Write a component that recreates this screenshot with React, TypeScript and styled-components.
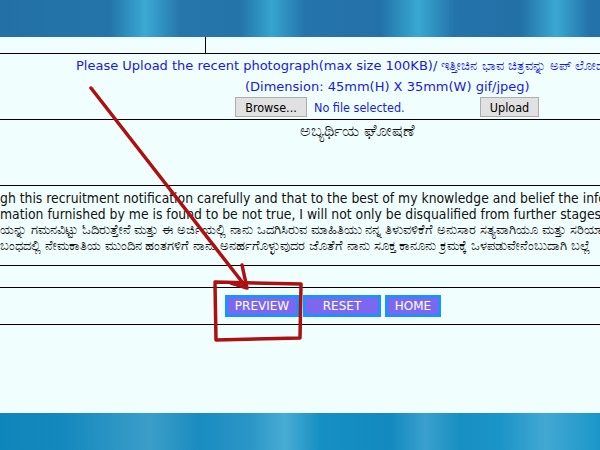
import styled, { createGlobalStyle } from "styled-components";

const GlobalStyle = createGlobalStyle`
  html, body {
    margin: 0;
    padding: 0;
    background: #f0fefe;
  }
  * { box-sizing: border-box; }
`;

const Page = styled.div`
  position: relative;
  width: 600px;
  height: 450px;
  overflow: hidden;
  display: flex;
  flex-direction: column;
  background: #f0fefe;
  font-family: "DejaVu Sans", Verdana, sans-serif;
`;

const Banner = styled.div`
  height: 37px;
  flex: none;
  background:
    linear-gradient(90deg,
      #2270a6 0px, #2474aa 110px, #3aaad2 145px, #2676ac 180px,
      #2474aa 240px, #36a4cf 272px, #2574ab 305px,
      #2371a8 380px, #38a8d2 418px, #2473aa 455px,
      #2270a6 520px, #3aa8d2 556px, #2372a9 590px);
`;

const Footer = styled.div`
  height: 37px;
  flex: none;
  background:
    linear-gradient(90deg,
      #0f86bb 0px, #1388bd 60px, #3b9ec8 150px, #1a8cc0 200px,
      #2a96c6 250px, #48acd3 285px, #1590c4 320px,
      #1389bf 390px, #3aa0cc 425px, #188fc3 460px,
      #1b94c8 500px, #42a8d2 545px, #1b96ca 600px);
`;

/* $height is the inner height; the 1px rule below is added on top */
const Row = styled.div<{ $height: number }>`
  flex: none;
  height: ${(p) => p.$height + 1}px;
  border-bottom: 1px solid #000;
`;

const TopRow = styled(Row)`
  display: flex;
`;

const TopCell = styled.div`
  width: 206px;
  border-right: 1px solid #000;
`;

const UploadBlock = styled(Row)`
  display: flex;
  flex-direction: column;
  padding-top: 3px;
  color: #1a1ad8;
  font-size: 13px;
`;

const BlueLine = styled.div<{ $indent: number }>`
  padding-left: ${(p) => p.$indent}px;
  white-space: nowrap;
  line-height: 17px;
  height: 17px;
  & + & {
    margin-top: 5px;
    line-height: 16px;
    height: 16px;
  }
`;

const FileRow = styled.div`
  display: flex;
  align-items: center;
  margin-top: 2px;
  padding-left: 235px;
  height: 20px;
  font-family: "DejaVu Sans Condensed", "DejaVu Sans", sans-serif;
  font-size: 12.5px;
`;

const GrayButton = styled.button<{ $width: number }>`
  width: ${(p) => p.$width}px;
  height: 20px;
  padding: 0;
  background: #e1e1e1;
  border: 1px solid #adadad;
  color: #000;
  font-family: "DejaVu Sans Condensed", "DejaVu Sans", sans-serif;
  font-size: 12.5px;
`;

const FileName = styled.span`
  width: 173px;
  padding-left: 7px;
  color: #1a1ad8;
`;

const TitleBlock = styled(Row)`
  padding: 1px 0 0 300px;
  font-size: 16px;
  line-height: 20px;
  color: #111;
  font-family: "DejaVu Sans", "Noto Sans", sans-serif;
`;

const Declaration = styled(Row)`
  padding-top: 4px;
  white-space: nowrap;
  color: #111;
  font-family: "DejaVu Sans Condensed", "DejaVu Sans", sans-serif;
`;

const DeclLine = styled.div<{ $kannada?: boolean }>`
  height: 16px;
  line-height: 16px;
  font-size: ${(p) => (p.$kannada ? 13.4 : 13.8)}px;
`;

const ButtonRow = styled(Row)`
  display: flex;
  gap: 4px;
  padding: 7px 0 0 225px;
`;

const ActionButton = styled.button<{ $width: number }>`
  width: ${(p) => p.$width}px;
  height: 22px;
  padding: 0;
  background: #7b68ee;
  border: 3px solid #1e90ff;
  color: #fff;
  font-family: "DejaVu Sans", Tahoma, sans-serif;
  font-size: 12px;
`;

const Spacer = styled.div`
  flex: 1;
`;

const Annotation = styled.svg`
  position: absolute;
  left: 0;
  top: 0;
  pointer-events: none;
`;

export default function App() {
  return (
    <>
      <GlobalStyle />
      <Page>
        <Banner />
        <TopRow $height={16}>
          <TopCell />
        </TopRow>
        <UploadBlock $height={65}>
          <BlueLine $indent={76}>
            Please Upload the recent photograph(max size 100KB)/ ಇತ್ತೀಚಿನ ಭಾವ ಚಿತ್ರವನ್ನು ಅಪ್ ಲೋಡ್ ಮಾಡಿ
          </BlueLine>
          <BlueLine $indent={245}>(Dimension: 45mm(H) X 35mm(W) gif/jpeg)</BlueLine>
          <FileRow>
            <GrayButton $width={72}>Browse...</GrayButton>
            <FileName>No file selected.</FileName>
            <GrayButton $width={59}>Upload</GrayButton>
          </FileRow>
        </UploadBlock>
        <TitleBlock $height={65}>ಅಬ್ಯರ್ಥಿಯ ಘೋಷಣೆ</TitleBlock>
        <Declaration $height={79}>
          <DeclLine>
            gh this recruitment notification carefully and that to the best of my knowledge and belief the information
          </DeclLine>
          <DeclLine>
            mation furnished by me is found to be not true, I will not only be disqualified from further stages
          </DeclLine>
          <DeclLine $kannada>
            ಯನ್ನು ಗಮನವಿಟ್ಟು ಓದಿರುತ್ತೇನೆ ಮತ್ತು ಈ ಅರ್ಜಿಯಲ್ಲಿ ನಾನು ಒದಗಿಸಿರುವ ಮಾಹಿತಿಯು ನನ್ನ ತಿಳುವಳಿಕೆಗೆ ಅನುಸಾರ ಸತ್ಯವಾಗಿಯೂ ಮತ್ತು ಸರಿಯಾಗಿಯೂ
          </DeclLine>
          <DeclLine $kannada>
            ಬಂಧದಲ್ಲಿ ನೇಮಕಾತಿಯ ಮುಂದಿನ ಹಂತಗಳಿಗೆ ನಾನು ಅನರ್ಹಗೊಳ್ಳುವುದರ ಜೊತೆಗೆ ನಾನು ಸೂಕ್ತ ಕಾನೂನು ಕ್ರಮಕ್ಕೆ ಒಳಪಡುವೇನೆಂಬುದಾಗಿ ಬಲ್ಲೆ
          </DeclLine>
        </Declaration>
        <Row $height={21} />
        <ButtonRow $height={36}>
          <ActionButton $width={74}>PREVIEW</ActionButton>
          <ActionButton $width={78}>RESET</ActionButton>
          <ActionButton $width={56}>HOME</ActionButton>
        </ButtonRow>
        <Spacer />
        <Footer />
        <Annotation width="600" height="450" viewBox="0 0 600 450">
          <g fill="none" stroke="#ad1010" strokeWidth="3.5" strokeLinecap="round" strokeLinejoin="round">
            <path d="M91 88 L246 287" />
            <path d="M242 265 L247 288 L231 283" />
            <path d="M215 282 L301 284 L300 338 L216 340 L215 284" />
          </g>
        </Annotation>
      </Page>
    </>
  );
}
